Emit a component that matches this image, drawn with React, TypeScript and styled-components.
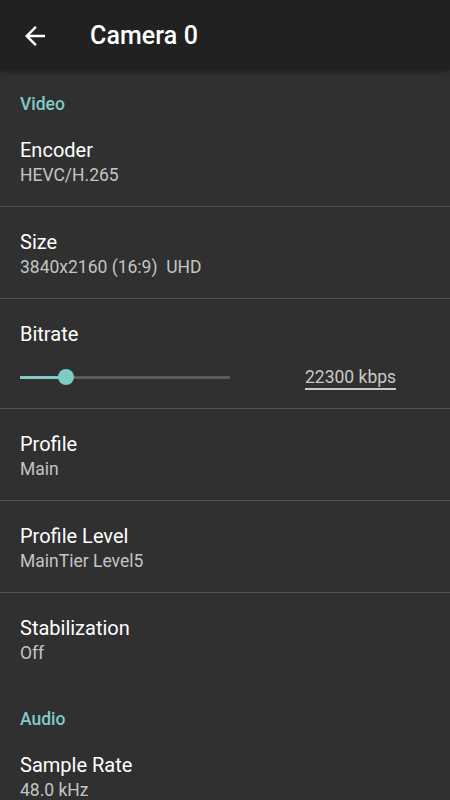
import styled, { createGlobalStyle } from "styled-components";

const GlobalStyle = createGlobalStyle`
  html, body {
    margin: 0;
    padding: 0;
    background: #303030;
  }
  body {
    font-family: Roboto, "Noto Sans", sans-serif;
  }
`;

const Screen = styled.div`
  width: 450px;
  height: 800px;
  overflow: hidden;
  background: #303030;
  display: flex;
  flex-direction: column;
`;

const Toolbar = styled.header`
  height: 70px;
  flex-shrink: 0;
  background: #212121;
  display: flex;
  align-items: center;
  padding: 0 20px;
  box-shadow: 0 2px 5px rgba(0, 0, 0, 0.35);
  position: relative;
  z-index: 1;
`;

const BackButton = styled.div`
  width: 30px;
  height: 30px;
  display: flex;
  align-items: center;
  justify-content: center;
  margin-right: 40px;
  margin-top: 1px;
`;

const Title = styled.h1`
  margin: 0;
  color: #fff;
  font-size: 25px;
  font-weight: 500;
  letter-spacing: 0.1px;
`;

const List = styled.main`
  display: flex;
  flex-direction: column;
`;

const Category = styled.div`
  height: 45px;
  box-sizing: border-box;
  padding: 23px 20px 0;
  color: #80cbc4;
  font-size: 17.5px;
  font-weight: 500;
  line-height: 22px;
`;

const Row = styled.div<{ $divider?: boolean }>`
  padding: 22px 20px 19px;
  border-bottom: 1px solid ${(p) => (p.$divider ? "#4f4f4f" : "transparent")};
`;

const RowTitle = styled.div`
  color: #fff;
  font-size: 20px;
  line-height: 26px;
`;

const RowSummary = styled.div`
  color: #c4c4c4;
  font-size: 17.5px;
  line-height: 24px;
`;

const SliderLine = styled.div`
  margin-top: 14px;
  margin-bottom: -4px;
  height: 32px;
  display: flex;
  align-items: center;
`;

const Track = styled.div`
  position: relative;
  width: 210px;
  height: 3px;
  background: #5c5c5c;
`;

const TrackFill = styled.div`
  position: absolute;
  left: 0;
  top: 0;
  bottom: 0;
  background: #80cbc4;
`;

const Thumb = styled.div`
  position: absolute;
  top: 50%;
  width: 16px;
  height: 16px;
  border-radius: 50%;
  background: #80cbc4;
  transform: translate(-50%, -50%);
`;

const SliderValue = styled.div`
  margin-left: 75px;
  color: #c8c8c8;
  font-size: 17.5px;
  line-height: 22px;
  border-bottom: 2px solid #c8c8c8;
  margin-top: 2px;
`;

function BackArrow() {
  return (
    <svg width="30" height="30" viewBox="0 0 24 24" fill="#fff">
      <path d="M20 11H7.83l5.59-5.59L12 4l-8 8 8 8 1.41-1.41L7.83 13H20v-2z" />
    </svg>
  );
}

function Pref({
  title,
  summary,
  divider = true,
}: {
  title: string;
  summary: string;
  divider?: boolean;
}) {
  return (
    <Row $divider={divider}>
      <RowTitle>{title}</RowTitle>
      <RowSummary>{summary}</RowSummary>
    </Row>
  );
}

function SliderPref({ title, percent, value }: { title: string; percent: number; value: string }) {
  return (
    <Row $divider>
      <RowTitle>{title}</RowTitle>
      <SliderLine>
        <Track>
          <TrackFill style={{ width: `${percent}%` }} />
          <Thumb style={{ left: `${percent}%` }} />
        </Track>
        <SliderValue>{value}</SliderValue>
      </SliderLine>
    </Row>
  );
}

export default function App() {
  return (
    <>
      <GlobalStyle />
      <Screen>
        <Toolbar>
          <BackButton>
            <BackArrow />
          </BackButton>
          <Title>Camera 0</Title>
        </Toolbar>
        <List>
          <Category>Video</Category>
          <Pref title="Encoder" summary="HEVC/H.265" />
          <Pref title="Size" summary={"3840x2160 (16:9)\u00a0 UHD"} />
          <SliderPref title="Bitrate" percent={22} value="22300 kbps" />
          <Pref title="Profile" summary="Main" />
          <Pref title="Profile Level" summary="MainTier Level5" />
          <Pref title="Stabilization" summary="Off" divider={false} />
          <Category>Audio</Category>
          <Pref title="Sample Rate" summary="48.0 kHz" />
        </List>
      </Screen>
    </>
  );
}
